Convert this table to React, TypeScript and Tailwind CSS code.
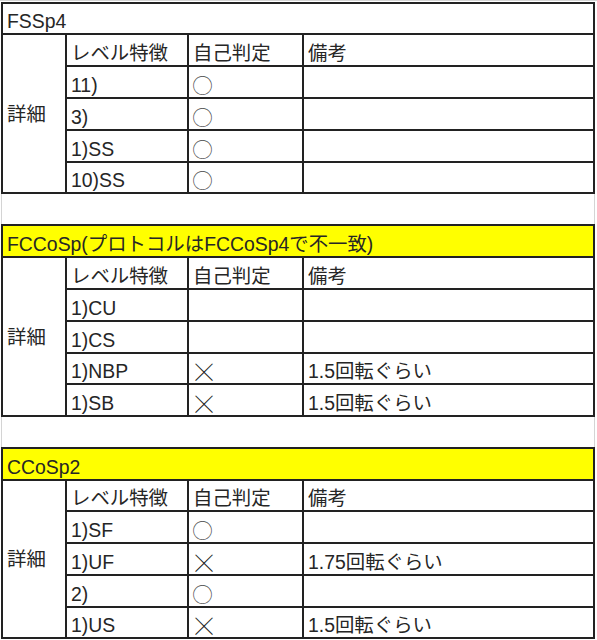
import React from "react";

type Row = { h: string; level: string; judge: string; note: string };
type Tbl = {
  title: string;
  yellow: boolean;
  titleH: string;
  headH: string;
  rows: Row[];
  gap?: boolean;
};

const tables: Tbl[] = [
  {
    title: "FSSp4",
    yellow: false,
    titleH: "h-[31px]",
    headH: "h-[32px]",
    rows: [
      { h: "h-[32px]", level: "11)", judge: "〇", note: "" },
      { h: "h-[32px]", level: "3)", judge: "〇", note: "" },
      { h: "h-[32px]", level: "1)SS", judge: "〇", note: "" },
      { h: "h-[31px]", level: "10)SS", judge: "〇", note: "" },
    ],
  },
  {
    title: "FCCoSp(プロトコルはFCCoSp4で不一致)",
    yellow: true,
    gap: true,
    titleH: "h-[32px]",
    headH: "h-[32px]",
    rows: [
      { h: "h-[32px]", level: "1)CU", judge: "", note: "" },
      { h: "h-[32px]", level: "1)CS", judge: "", note: "" },
      { h: "h-[31px]", level: "1)NBP", judge: "×", note: "1.5回転ぐらい" },
      { h: "h-[32px]", level: "1)SB", judge: "×", note: "1.5回転ぐらい" },
    ],
  },
  {
    title: "CCoSp2",
    yellow: true,
    gap: true,
    titleH: "h-[32px]",
    headH: "h-[31px]",
    rows: [
      { h: "h-[32px]", level: "1)SF", judge: "〇", note: "" },
      { h: "h-[32px]", level: "1)UF", judge: "×", note: "1.75回転ぐらい" },
      { h: "h-[32px]", level: "2)", judge: "〇", note: "" },
      { h: "h-[31px]", level: "1)US", judge: "×", note: "1.5回転ぐらい" },
    ],
  },
];

const cell =
  "border-r-2 border-b-2 border-[#222] flex items-end pl-[4px] pb-[2px] leading-[20px] whitespace-nowrap";

function Judge({ v }: { v: string }) {
  if (!v) return null;
  if (v === "×") {
    return (
      <span className="font-['Noto_Sans_CJK_JP',sans-serif] text-[28px] leading-[18px] font-thin text-[#222] relative -top-[1px] -ml-[3px]">
        ×
      </span>
    );
  }
  return (
    <span className="font-['Noto_Sans_CJK_JP',sans-serif] text-[21px] leading-[20px] font-thin text-[#444] relative -top-[1px] -ml-[1px]">
      〇
    </span>
  );
}

function Table({ t }: { t: Tbl }) {
  return (
    <>
      {t.gap && (
        <div className="h-[30px] w-[594px] border-l border-r border-[#d4d4d4]" />
      )}
      <div className="w-[594px] grid grid-cols-[64px_122px_115px_291px] border-l-2 border-t-2 border-[#222]">
        <div
          className={`${cell} col-span-4 ${t.titleH} ${t.yellow ? "bg-[#ffff00]" : "bg-white"}`}
        >
          {t.title}
        </div>
        <div className="row-span-5 border-r-2 border-b-2 border-[#222] flex items-center pl-[4px] pt-[2px]">
          詳細
        </div>
        <div className={`${cell} ${t.headH}`}>レベル特徴</div>
        <div className={`${cell} ${t.headH}`}>自己判定</div>
        <div className={`${cell} ${t.headH}`}>備考</div>
        {t.rows.map((r, i) => (
          <React.Fragment key={i}>
            <div className={`${cell} ${r.h}`}>{r.level}</div>
            <div className={`${cell} ${r.h}`}>
              <Judge v={r.judge} />
            </div>
            <div className={`${cell} ${r.h}`}>{r.note}</div>
          </React.Fragment>
        ))}
      </div>
    </>
  );
}

export default function App() {
  return (
    <div className="w-[597px] h-[640px] bg-white overflow-hidden text-[19.4px] text-[#262626] font-['Liberation_Sans','Noto_Sans_CJK_JP',sans-serif] border-t border-[#d4d4d4]">
      <div className="ml-[1px] mt-[1px]">
        {tables.map((t, i) => (
          <Table key={i} t={t} />
        ))}
      </div>
    </div>
  );
}
